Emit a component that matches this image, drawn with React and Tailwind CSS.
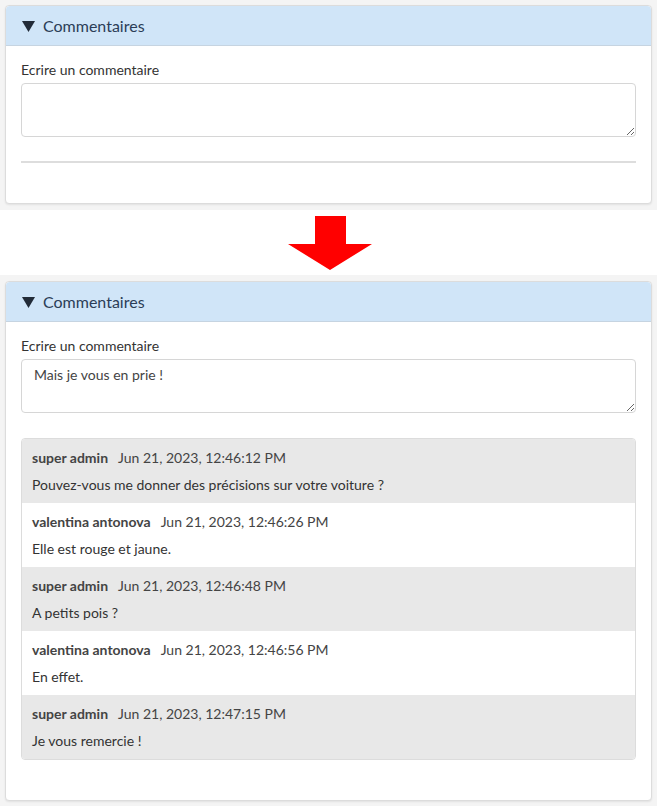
import React from "react";

const comments = [
  { author: "super admin", date: "Jun 21, 2023, 12:46:12 PM", text: "Pouvez-vous me donner des précisions sur votre voiture ?" },
  { author: "valentina antonova", date: "Jun 21, 2023, 12:46:26 PM", text: "Elle est rouge et jaune." },
  { author: "super admin", date: "Jun 21, 2023, 12:46:48 PM", text: "A petits pois ?" },
  { author: "valentina antonova", date: "Jun 21, 2023, 12:46:56 PM", text: "En effet." },
  { author: "super admin", date: "Jun 21, 2023, 12:47:15 PM", text: "Je vous remercie !" },
];

function Header() {
  return (
    <div className="h-[40px] flex items-center gap-[8px] pl-[16px] bg-[#d0e5f8] border-b border-[#c6d4e1] rounded-t-[4px]">
      <svg width="13" height="11" viewBox="0 0 13 11" className="mt-[1px]">
        <polygon points="0,0 13,0 6.5,11" fill="#222b38" />
      </svg>
      <span className="text-[16px] text-[#2b3d57]">Commentaires</span>
    </div>
  );
}

function Card({ value, children }) {
  return (
    <div className="bg-white border border-[#dcdcdc] rounded-[4px] shadow-[0_1px_2px_rgba(0,0,0,0.08)]">
      <Header />
      <div className="px-[15px] pt-[14px] pb-[40px]">
        <label className="block text-[14px] leading-[20px] text-[#333]">Ecrire un commentaire</label>
        <textarea
          readOnly
          value={value}
          className="block mt-[3px] w-full h-[54px] px-[12px] py-[5px] border border-[#d6d6d6] rounded-[4px] text-[14px] leading-[20px] text-[#444] bg-white resize-y outline-none"
        />
        {children}
      </div>
    </div>
  );
}

export default function App() {
  return (
    <div className="w-[657px] min-h-[806px] bg-[#f4f4f4] font-['Lato','Liberation_Sans',sans-serif]">
      <div className="p-[5px] pb-[6px]">
        <Card value="">
          <div className="mt-[24px] h-[2px] bg-[#dddddd]" />
        </Card>
      </div>

      <div className="h-[65px] bg-white flex justify-center items-start pt-[6px]">
        <svg width="84" height="54" viewBox="0 0 84 54" className="ml-[3px]">
          <polygon points="27,0 58,0 58,28 84,28 42,54 0,28 27,28" fill="#ff0000" />
        </svg>
      </div>

      <div className="p-[5px] pt-[6px]">
        <Card value="Mais je vous en prie !">
          <div className="mt-[25px] border border-[#dcdcdc] rounded-[4px] overflow-hidden">
            {comments.map((c, i) => (
              <div
                key={i}
                className={`h-[64px] px-[10px] pt-[9px] ${i % 2 === 0 ? "bg-[#e8e8e8]" : "bg-white"}`}
              >
                <div className="flex gap-[10px] text-[14px] leading-[20px]">
                  <span className="font-bold text-[#444]">{c.author}</span>
                  <span className="text-[#444]">{c.date}</span>
                </div>
                <div className="mt-[7px] text-[14px] leading-[20px] text-[#333]">{c.text}</div>
              </div>
            ))}
          </div>
        </Card>
      </div>
    </div>
  );
}
